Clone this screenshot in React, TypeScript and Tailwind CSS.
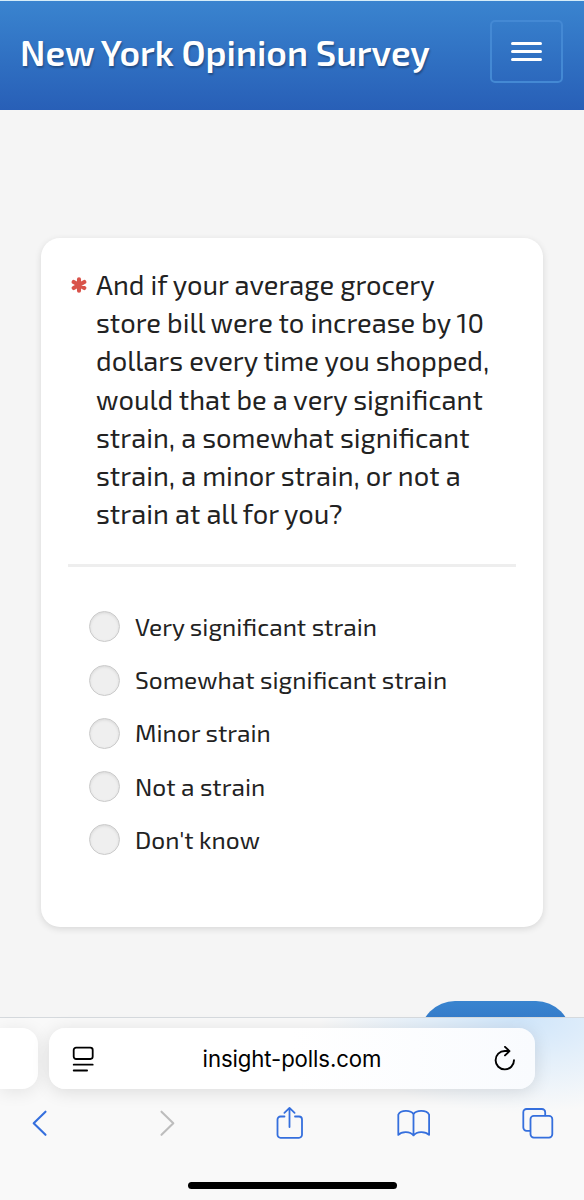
import React from 'react';

const QUESTION =
  'And if your average grocery store bill were to increase by 10 dollars every time you shopped, would that be a very significant strain, a somewhat significant strain, a minor strain, or not a strain at all for you?';

const OPTIONS = [
  'Very significant strain',
  'Somewhat significant strain',
  'Minor strain',
  'Not a strain',
  "Don't know",
];

const Header: React.FC = () => (
  <header className="flex h-[110px] shrink-0 items-start justify-between border-t border-[#d5edf8] bg-linear-to-b from-[#3a84cf] to-[#285fb7] pr-[21px] pl-[20px]">
    <h1 className="mt-[31px] text-[35.5px] leading-[40px] font-semibold whitespace-nowrap text-white [text-shadow:1px_2px_2px_rgba(0,0,0,0.3)]">
      New York Opinion Survey
    </h1>
    <button
      aria-label="Menu"
      className="mt-[19px] flex h-[63px] w-[73px] flex-col items-center justify-center gap-[5px] rounded-[5px] border-2 border-[#4489d4]"
    >
      <span className="h-[3px] w-[31px] rounded-full bg-white" />
      <span className="h-[3px] w-[31px] rounded-full bg-white" />
      <span className="h-[3px] w-[31px] rounded-full bg-white" />
    </button>
  </header>
);

const RequiredMark: React.FC = () => (
  <svg className="mt-[12px] ml-[3px] h-4 w-4 shrink-0" viewBox="0 0 16 16" fill="none" stroke="#d9534a" strokeWidth="4.1" strokeLinecap="round">
    <path d="M8 2.3v11.4M2.7 5l10.6 6M13.3 5 2.7 11" />
  </svg>
);

const QuestionCard: React.FC = () => (
  <section className="mx-[41px] mt-[128px] h-[689px] shrink-0 rounded-[19px] bg-white px-[27px] pt-[27px] shadow-[0_2px_7px_rgba(0,0,0,0.12)]">
    <div className="flex h-[299px] items-start">
      <RequiredMark />
      <h2 className="ml-[9px] w-[398px] text-[27.3px] leading-[38.17px] text-[#222]">{QUESTION}</h2>
    </div>
    <hr className="border-t-[3px] border-[#eeeeee]" />
    <div className="mt-[33.4px] ml-[21px]">
      {OPTIONS.map((label) => (
        <label key={label} className="flex h-[53.2px] items-center">
          <span className="h-[31px] w-[31px] shrink-0 rounded-full border-[1.5px] border-[#cbcbcb] bg-[#efefef] shadow-[inset_0_1px_3px_rgba(0,0,0,0.1)]" />
          <span className="ml-[15px] text-[24.5px] leading-8 whitespace-nowrap text-[#222]">{label}</span>
        </label>
      ))}
    </div>
  </section>
);

const AddressBar: React.FC = () => (
  <div className="flex h-[62px] gap-[11px]">
    <div className="h-[61px] w-[38px] rounded-r-[16px] bg-white shadow-[0_3px_18px_rgba(0,0,0,0.09)]" />
    <div className="flex h-[61px] w-[486px] items-center rounded-[16px] bg-linear-to-r from-white from-50% to-[#f9fbfe] pr-[18px] pl-[23px] shadow-[0_3px_18px_rgba(0,0,0,0.12)]">
      <svg className="h-[26px] w-[23px]" viewBox="0 0 23 26" fill="none" stroke="#000" strokeWidth="1.8" strokeLinecap="round">
        <rect x="1.7" y="1.7" width="19" height="11.3" rx="2.4" />
        <path d="M1.7 18.7h19M1.7 24.5h13.4" />
      </svg>
      <span className="flex-1 pt-px pr-[4px] text-center font-['Inter',sans-serif] text-[22.2px] tracking-[-0.1px] text-black">
        insight-polls.com
      </span>
      <svg className="h-[26px] w-[24px]" viewBox="0 0 24 26" fill="none" stroke="#000" strokeWidth="1.9" strokeLinecap="round" strokeLinejoin="round">
        <path d="M21 14.2a9.2 9.2 0 1 1-9.2-9.2h4.5M12 .9l4.500 4.200-4.500 4.300" />
      </svg>
    </div>
  </div>
);

const Toolbar: React.FC = () => (
  <div className="mt-[16px] flex h-[34px] items-center pl-[31px] text-[#356fdd]">
    <svg className="h-[34px] w-[16px]" viewBox="0 0 16 34" fill="none" stroke="currentColor" strokeWidth="2.1" strokeLinecap="round" strokeLinejoin="round">
      <path d="M14.5 5.7 2.7 17.2l11.8 11.6" />
    </svg>
    <svg className="ml-[112px] h-[34px] w-[16px] text-[#bdbdbd]" viewBox="0 0 16 34" fill="none" stroke="currentColor" strokeWidth="2.1" strokeLinecap="round" strokeLinejoin="round">
      <path d="m2.5 5.7 11.8 11.5L2.5 28.8" />
    </svg>
    <svg className="ml-[100px] h-[34px] w-[28px]" viewBox="0 0 28 34" fill="none" stroke="currentColor" strokeWidth="1.8" strokeLinecap="round" strokeLinejoin="round">
      <path d="M9.500 10.500H5.500a3 3 0 0 0-3 3v15.300a3 3 0 0 0 3 3h18.500a3 3 0 0 0 3-3V13.500a3 3 0 0 0-3-3h-4M14.500 21V2M9.400 6.800l5.100-4.900 5.100 4.900" />
    </svg>
    <svg className="ml-[94px] h-[34px] w-[34px]" viewBox="0 0 34 34" fill="none" stroke="currentColor" strokeWidth="1.8" strokeLinecap="round" strokeLinejoin="round">
      <path d="M16.500 8.200C13.700 3.800 3.900 3.800 1.300 8.600v20.300C4.600 25 13.200 25 16.500 29.400c3.300-4.400 11.900-4.400 15.600-.5V8.600C29.500 3.800 19.300 3.800 16.500 8.200Zm0 0v21.200" />
    </svg>
    <svg className="ml-[91px] h-[34px] w-[32px]" viewBox="0 0 32 34" fill="none" stroke="currentColor" strokeWidth="1.8" strokeLinecap="round" strokeLinejoin="round">
      <path d="M8 24.800H4.600A3.300 3.300 0 0 1 1.300 21.500V6.300A3.300 3.300 0 0 1 4.600 3h15.300a3.300 3.300 0 0 1 3.300 3.300v3" />
      <rect x="8.5" y="9.8" width="21.8" height="21.8" rx="3.3" />
    </svg>
  </div>
);

export default function App() {
  return (
    <div className="flex h-[1200px] w-[584px] flex-col overflow-hidden bg-[#f5f5f5] font-['Exo_2',Roboto,sans-serif]">
      <Header />
      <main className="flex h-[907px] shrink-0 flex-col overflow-hidden">
        <QuestionCard />
        {/* top of the next button, cut off by the browser bar */}
        <div className="mt-[74px] mr-[13px] h-[70px] w-[151px] shrink-0 self-end rounded-full bg-linear-to-b from-[#3984cf] to-[#2a62b9]" />
      </main>
      <footer className="flex h-[183px] shrink-0 flex-col border-t border-[#d5d9dd] bg-[#f9f9f9] bg-[radial-gradient(ellipse_200px_95px_at_520px_0px,#cfe5fa_0%,#e3effa_45%,transparent_100%)] pt-[10px]">
        <AddressBar />
        <Toolbar />
        <div className="mx-auto mt-[42px] h-[7px] w-[209px] shrink-0 rounded-full bg-black" />
      </footer>
    </div>
  );
}
